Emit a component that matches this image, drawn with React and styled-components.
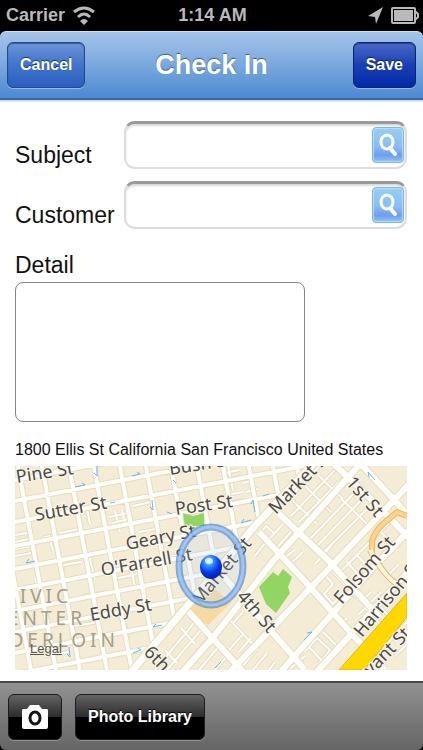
import React from "react";

// Style
import styled, { createGlobalStyle } from "styled-components";

// Streets north of Market run on one grid, the ones south of it on another
const northStreets = [-28, -7, 14, 35, 56, 80, 103, 124, 145, 166, 187, 208, 229, 250];
const northAvenues = [-46, -22, 3, 27, 54, 79, 105, 131, 156, 182, 208, 234, 258, 282];
const northAlleys = [
  "M18 50 L40 46 M45 67 L69 62 M72 44 L75 58 M94 51 L113 47 M97 57 L114 53",
  "M100 45 L105 66 M107 44 L110 58 M28 72 L34 70 L38 85 M0 76 L14 73",
  "M0 69 L12 67 M0 83 L16 80 M0 90 L16 87 M118 40 L140 35 M124 66 L146 62",
  "M43 100 L66 96 M49 106 L45 92 M20 112 L24 129 M74 90 L80 113",
  "M68 130 L91 126 M103 112 L128 107 M116 102 L121 126 M143 93 L166 89",
  "M97 168 L120 164 M110 158 L113 173 M60 160 L84 156 M30 190 L54 186",
  "M205 8 L224 4 M207 15 L226 11 M213 0 L218 24 M228 17 L240 14 M231 26 L243 23",
  "M188 20 L208 16 M205 30 L228 26 M207 38 L229 34 M210 24 L214 45 M150 8 L172 4",
];

const southRoads = [
  "M196 174 L259 94 L286 64 L346 -3",
  "M164 210 L196 174",
  "M211 210 L306 111 L400 12",
  "M262 210 L356 104 L400 58",
  "M298 210 L392 107 L400 98",
  "M172 144 L232 210",
  "M205 106 L290 204",
  "M244 66 L287 112 L336 167 L370 204",
  "M263 47 L313 94 L365 152",
  "M317 -4 L356 33 L400 78",
  "M344 -4 L372 26 L400 57",
];

const southAlleys = [
  "M184 151 L140 204 M191 158 L152 204 M199 165 L167 204 M150 184 L162 197",
  "M206 178 L184 204 M215 187 L200 204 M166 162 L180 178",
  "M213 152 L243 184 M228 146 L218 157 M236 172 L224 186 M244 180 L226 202",
  "M252 187 L238 204 M260 196 L254 204 M229 167 L214 184",
  "M243 70 L251 60 L260 68 M250 78 L268 58 M258 86 L276 66 M240 90 L254 72",
  "M266 40 L303 2 M276 50 L320 4 M284 56 L328 12 M294 74 L344 22",
  "M301 81 L352 28 M307 88 L360 35 M318 98 L369 46 M325 106 L377 54",
  "M278 35 L302 58 M291 21 L316 46 M304 10 L328 33 M336 42 L355 61",
  "M300 98 L316 80 M268 94 L279 84 M273 100 L288 86 M326 33 L336 42",
  "M303 118 L309 108 L318 118 L309 128 L318 138 L325 130 M315 102 L342 132",
  "M332 96 L346 112 M341 88 L354 102 M336 120 L348 134 L356 126",
  "M289 186 L302 172 L315 184 L304 198 M293 180 L308 196 M308 166 L322 180",
  "M262 152 L246 170 M276 202 L290 190 M326 158 L332 152 M344 148 L366 126",
  "M372 110 L384 98 M360 96 L378 78 M364 140 L376 152 M350 142 L382 176",
  "M368 182 L392 156 M380 190 L392 178 M366 66 L382 84",
];

const oneWays = [
  "M60 21 L70 19 M67 17 L70 19",
  "M82 0 L82 10 M79 7 L82 10",
  "M117 10 L125 8 M122 6 L125 8",
  "M137 34 L138 44 M135 41 L138 44",
  "M95 37 L100 36",
  "M152 46 L157 48",
  "M158 14 L161 17",
  "M11 97 L20 95 M14 93 L11 97",
  "M138 161 L147 159 M141 158 L138 161",
  "M118 187 L126 184 M123 182 L126 184",
  "M54 181 L55 191 M52 188 L55 191",
  "M238 34 L240 46 M236 38 L238 34",
  "M226 57 L236 54 M229 53 L226 57",
  "M248 30 L254 28",
  "M353 6 L360 14 M353 6 L354 11",
  "M289 174 L297 166 M292 167 L297 166",
  "M200 202 L206 196",
];

const streetLabels = [
  { name: "Pine St", x: 2, y: 17, angle: -9 },
  { name: "Bush St", x: 155, y: 9, angle: -9 },
  { name: "Sutter St", x: 21, y: 55, angle: -10 },
  { name: "Post St", x: 161, y: 49, angle: -8 },
  { name: "Geary St", x: 112, y: 84, angle: -11 },
  { name: "O'Farrell St", x: 87, y: 110, angle: -10 },
  { name: "Eddy St", x: 76, y: 155, angle: -10 },
  { name: "Market St", x: 261, y: 49, angle: -46 },
  { name: "Market St", x: 185, y: 140, angle: -50 },
  { name: "1st St", x: 330, y: 17, angle: 49 },
  { name: "4th St", x: 221, y: 131, angle: 49 },
  { name: "6th St", x: 128, y: 187, angle: 46 },
  { name: "Folsom St", x: 327, y: 139, angle: -49 },
  { name: "Harrison St", x: 347, y: 172, angle: -50 },
  { name: "Bryant St", x: 343, y: 224, angle: -46 },
];

const Road = ({ d, size }) => (
  <>
    <path d={d} stroke="#e6dcc3" strokeWidth={size + 2} />
    <path d={d} stroke="#fffefa" strokeWidth={size} />
  </>
);

const CityMap = () => {
  const streets = northStreets.map((y) => `M-10 ${y + 2} L320 ${y - 62}`).join(" ");
  const avenues = northAvenues.map((x) => `M${x - 2} -10 L${x + 39} 210`).join(" ");

  return (
    <MapDrawing viewBox="0 0 392 204" role="img" aria-label="Map of San Francisco">
      <defs>
        <clipPath id="north">
          <path d="M0 0 H297 L239 61 L118 204 H0 Z" />
        </clipPath>
        <radialGradient id="pin" cx="40%" cy="25%" r="75%">
          <stop offset="0" stopColor="#a8e4ff" />
          <stop offset="0.3" stopColor="#2d8dff" />
          <stop offset="0.65" stopColor="#0836e8" />
          <stop offset="1" stopColor="#0522a8" />
        </radialGradient>
      </defs>
      <rect width="392" height="204" fill="#f5ecd6" />
      <path d="M172 145 L196 120 L216 137 L190 162 Z" fill="#f6daa0" />
      <g fill="none" strokeLinejoin="round">
        <g clipPath="url(#north)">
          <Road d={northAlleys.join(" ")} size={2} />
          <Road d={`${streets} ${avenues}`} size={4} />
        </g>
        <Road d={southAlleys.join(" ")} size={2} />
        <Road d={southRoads.join(" ")} size={6} />
        <Road d="M112 211 L239 61 L300 -4" size={7} />
        <path d="M357 90 V75 Q360 65 368 58 L382 46 L392 50 M355 84 Q370 112 385 120" stroke="#e9b766" strokeWidth="6" />
        <path d="M357 90 V75 Q360 65 368 58 L382 46 L392 50" stroke="#fbd48c" strokeWidth="4" />
        <path d="M355 84 Q370 112 385 120" stroke="#fff6df" strokeWidth="4" />
        <path d={oneWays.join(" ")} stroke="#62b8f2" strokeWidth="1" />
      </g>
      <path d="M168 47 L178 50 L189 47 V60 H170 Z" fill="#93d562" />
      <path
        d="M244 121 L258 106 L263 110 L268 103 L277 111 L273 121 L275 127 L261 147 L251 138 Z"
        fill="#93d562"
      />
      <path d="M324 204 L392 127 V151 L349 204 Z" fill="#ffd800" stroke="#e5b21c" strokeWidth="1" />
      <g fill="#a59e88" fontSize="19" letterSpacing="4" textAnchor="end">
        <text x="57" y="137">CIVIC</text>
        <text x="71" y="159">CENTER</text>
        <text x="104" y="181">TENDERLOIN</text>
      </g>
      <g fill="#4d4b48" fontSize="18" stroke="#fbf6ea" strokeWidth="2" paintOrder="stroke">
        {streetLabels.map(({ name, x, y, angle }) => (
          <text key={`${name}-${x}`} transform={`translate(${x} ${y}) rotate(${angle})`}>
            {name}
          </text>
        ))}
      </g>
      <ellipse cx="196" cy="100" rx="32" ry="39" fill="#a9ceff" fillOpacity="0.16" />
      <g fill="none">
        <ellipse cx="196" cy="100" rx="32" ry="39" stroke="#4a86d0" strokeOpacity="0.65" strokeWidth="7" />
        <ellipse cx="196" cy="100" rx="32" ry="39" stroke="#a9ceff" strokeOpacity="0.75" strokeWidth="3" />
      </g>
      <ellipse cx="196" cy="101" rx="11" ry="12" fill="url(#pin)" />
      <ellipse cx="194" cy="95" rx="4" ry="3" fill="#ffffff" fillOpacity="0.7" />
    </MapDrawing>
  );
};

const SearchField = ({ id, label }) => (
  <>
    <Label htmlFor={id}>{label}</Label>
    <FieldBox>
      <FieldInput id={id} type="text" />
      <SearchButton type="button" aria-label={`Search ${label}`}>
        <svg width="20" height="24" viewBox="0 0 20 24" fill="none" stroke="#ffffff">
          <ellipse cx="9" cy="9" rx="6" ry="7" strokeWidth="3" />
          <path d="M12 15 L17 21" strokeWidth="4" strokeLinecap="round" />
        </svg>
      </SearchButton>
    </FieldBox>
  </>
);

const App = () => {
  return (
    <>
      <GlobalStyle />
      <Screen>
        <StatusBar>
          <StatusGroup>
            <span>Carrier</span>
            <svg width="22" height="19" viewBox="0 0 22 19" fill="none" stroke="#b9b9b9" strokeWidth="3">
              <path d="M1 6 Q11 -2 21 6" />
              <path d="M5 11 Q11 5 17 11" />
              <path d="M11 19 L7 15 Q11 11 15 15 Z" fill="#b9b9b9" stroke="none" />
            </svg>
          </StatusGroup>
          <span>1:14 AM</span>
          <StatusGroup $end>
            <svg width="15" height="17" viewBox="0 0 15 17" fill="#b9b9b9">
              <path d="M15 0 L8 17 L7 10 L0 9 Z" />
            </svg>
            <svg width="28" height="17" viewBox="0 0 28 17" fill="none" stroke="#b9b9b9">
              <rect x="1" y="1" width="23" height="15" rx="1" strokeWidth="2" />
              <rect x="3" y="3" width="19" height="11" fill="#b9b9b9" stroke="none" />
              <path d="M24 5 H25 L27 7 V10 L25 12 H24" strokeWidth="2" />
            </svg>
          </StatusGroup>
        </StatusBar>

        <NavBar>
          <NavButton type="button">Cancel</NavButton>
          <Title>Check In</Title>
          <NavButton type="button" $primary>
            Save
          </NavButton>
        </NavBar>

        <Form>
          <Fields>
            <SearchField id="subject" label="Subject" />
            <SearchField id="customer" label="Customer" />
          </Fields>
          <DetailLabel htmlFor="detail">Detail</DetailLabel>
          <DetailArea id="detail" />
          <Address>1800 Ellis St California San Francisco United States</Address>
          <MapFrame>
            <CityMap />
            <LegalLink href="#legal">Legal</LegalLink>
          </MapFrame>
        </Form>

        <Toolbar>
          <ToolButton type="button" aria-label="Take photo">
            <svg width="28" height="26" viewBox="0 0 28 26">
              <path
                d="M2 5 H6 L9 1 H18 L21 5 H26 Q27 5 27 7 V23 Q27 25 25 25 H3 Q1 25 1 23 V7 Q1 5 2 5 Z"
                fill="#ffffff"
              />
              <ellipse cx="14" cy="14" rx="5" ry="6" fill="none" stroke="#151515" strokeWidth="3" />
            </svg>
          </ToolButton>
          <ToolButton type="button">Photo Library</ToolButton>
        </Toolbar>
      </Screen>
    </>
  );
};

export default App;

const GlobalStyle = createGlobalStyle`
  * {
    box-sizing: border-box;
  }

  body {
    margin: 0;
    background: #000000;
  }

  body, button, input, textarea {
    font-family: "Liberation Sans", Arial, sans-serif;
  }
`;

const Screen = styled.div`
  min-height: 100vh;
  display: flex;
  flex-direction: column;
`;

const StatusBar = styled.div`
  display: grid;
  grid-template-columns: 1fr auto 1fr;
  align-items: center;
  height: 31px;
  padding: 0 4px 0 6px;
  color: #b9b9b9;
  font-size: 18px;
  font-weight: 700;
`;

const StatusGroup = styled.div`
  display: flex;
  align-items: center;
  justify-content: ${({ $end }) => ($end ? "flex-end" : "flex-start")};
  gap: 8px;
`;

const NavBar = styled.header`
  display: grid;
  grid-template-columns: 1fr auto 1fr;
  align-items: center;
  height: 69px;
  padding: 0 7px;
  border-top: 1px solid #cfe0f4;
  border-bottom: 2px solid #2f6aab;
  border-radius: 6px 6px 0 0;
  background: linear-gradient(#a6c4ea, #7aa8dd 50%, #4c89d1);
`;

const Title = styled.h1`
  margin: 0;
  color: #ffffff;
  font-size: 27px;
  font-weight: 700;
  text-shadow: 0 -1px 1px rgba(30, 60, 110, 0.7);
`;

const NavButton = styled.button`
  justify-self: ${({ $primary }) => ($primary ? "end" : "start")};
  height: 46px;
  padding: 0 12px;
  border: 1px solid ${({ $primary }) => ($primary ? "#0c2670" : "#24498a")};
  border-radius: 6px;
  background: ${({ $primary }) =>
    $primary
      ? "linear-gradient(#4a6ac6, #1a3fb4 50%, #0429a8)"
      : "linear-gradient(#6c94d8, #4174cb 50%, #2a5fc0)"};
  box-shadow: inset 0 1px 1px rgba(0, 0, 30, 0.4), 0 1px 0 rgba(255, 255, 255, 0.35);
  color: #ffffff;
  font-size: 16px;
  font-weight: 700;
  text-shadow: 0 -1px 1px rgba(0, 0, 40, 0.6);
`;

const Form = styled.main`
  flex: 1;
  display: flex;
  flex-direction: column;
  padding: 21px 16px 11px 15px;
  background: #ffffff;
  box-shadow: inset 0 4px 3px -3px rgba(0, 0, 0, 0.25);
  color: #111111;
`;

const Fields = styled.div`
  display: grid;
  grid-template-columns: 109px minmax(0, 1fr);
  row-gap: 12px;
  align-items: end;
`;

const Label = styled.label`
  font-size: 23px;
  line-height: 28px;
`;

const FieldBox = styled.div`
  display: flex;
  align-items: center;
  height: 48px;
  padding: 0 1px 2px 8px;
  border: 2px solid #dddddd;
  border-top: 3px solid #999999;
  border-radius: 11px;
  box-shadow: inset 0 2px 2px rgba(0, 0, 0, 0.15);
`;

const FieldInput = styled.input`
  flex: 1;
  min-width: 0;
  height: 32px;
  padding: 0;
  border: none;
  outline: none;
  background: transparent;
  font-size: 18px;
`;

const SearchButton = styled.button`
  display: flex;
  align-items: center;
  justify-content: center;
  width: 32px;
  height: 36px;
  padding: 0;
  border: 1px solid #7fb4e4;
  border-radius: 4px;
  background: linear-gradient(#94d0f2, #8abcf3 55%, #6f9dee 80%, #8cc4f5);
  box-shadow: inset 0 0 1px 1px rgba(200, 232, 255, 0.7);
`;

const DetailLabel = styled(Label)`
  margin-top: 22px;
`;

const DetailArea = styled.textarea`
  width: 74%;
  height: 140px;
  margin-top: 3px;
  padding: 8px;
  border: 1px solid #858585;
  border-radius: 8px;
  outline: none;
  resize: none;
  background: #ffffff;
  font-size: 18px;
`;

const Address = styled.p`
  margin: 18px 0 6px;
  font-size: 16px;
  line-height: 20px;
`;

const MapFrame = styled.div`
  position: relative;
  overflow: hidden;
`;

const MapDrawing = styled.svg`
  display: block;
  width: 100%;
  font-family: "Noto Sans", "Open Sans", sans-serif;
`;

const LegalLink = styled.a`
  position: absolute;
  left: 15px;
  bottom: 13px;
  color: #555555;
  font-size: 13px;
  line-height: 16px;
`;

const Toolbar = styled.footer`
  display: flex;
  align-items: center;
  gap: 13px;
  height: 69px;
  padding: 0 8px;
  border-top: 2px solid #4a4a4a;
  border-radius: 0 0 6px 6px;
  background: linear-gradient(#929292, #7a7a7a 50%, #666666);
`;

const ToolButton = styled.button`
  display: flex;
  align-items: center;
  height: 46px;
  padding: 0 12px;
  border: 1px solid #1c1c1c;
  border-radius: 6px;
  background: linear-gradient(#636363, #2c2c2c 50%, #000000 50%, #000000);
  box-shadow: 0 1px 0 rgba(255, 255, 255, 0.25);
  color: #ffffff;
  font-size: 16px;
  font-weight: 700;
  text-shadow: 0 -1px 1px #000000;
`;
